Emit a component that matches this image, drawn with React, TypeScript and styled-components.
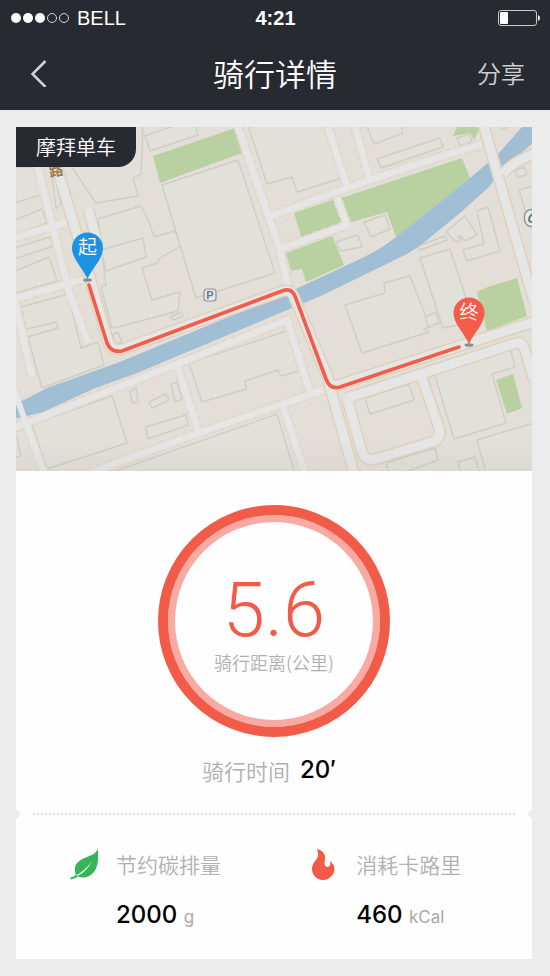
import React from "react";
import styled, { createGlobalStyle } from "styled-components";

const CJK = '"Noto Sans CJK SC", "Liberation Sans", sans-serif';
const INK = "#272a31";
const RED = "#f15b48";
const PAGE = "#ececec";

const GlobalStyle = createGlobalStyle`
  *, *::before, *::after { box-sizing: border-box; }
  body { margin: 0; background: ${PAGE}; font-family: ${CJK}; color: #000; }
  h1, p { margin: 0; font-weight: inherit; }
  svg { display: block; }
`;

const Header = styled.header`
  background: ${INK};
  color: #fff;
`;

const StatusBar = styled.div`
  display: grid;
  grid-template-columns: 1fr auto 1fr;
  align-items: center;
  height: 36px;
  padding: 0 10px 0 11px;
  font: 20px/36px "Liberation Sans", sans-serif;
`;

const Carrier = styled.div`
  display: flex;
  align-items: center;
  gap: 7px;
`;

const Clock = styled.time`
  font-weight: 700;
`;

const BatterySlot = styled.div`
  justify-self: end;
`;

const NavBar = styled.nav`
  display: grid;
  grid-template-columns: 1fr auto 1fr;
  align-items: center;
  height: 74px;
  padding: 0 25px;
`;

const Title = styled.h1`
  font-size: 31px;
  line-height: 44px;
  font-weight: 350;
`;

const NavButton = styled.button<{ $end?: boolean }>`
  justify-self: ${(p) => (p.$end ? "end" : "start")};
  padding: ${(p) => (p.$end ? "0" : "0 5px")};
  border: 0;
  background: none;
  color: #cfcfcf;
  font: 350 24px/36px ${CJK};
  cursor: pointer;
`;

const Main = styled.main`
  padding: 17px 18px 17px 16px;
`;

const Card = styled.article`
  background: #fefefe;
`;

const MapArea = styled.section`
  position: relative;
  overflow: hidden;
`;

const MapSvg = styled.svg`
  width: 100%;
  height: auto;
`;

const Brand = styled.p`
  position: absolute;
  top: 0;
  left: 0;
  padding: 0 20px;
  border-bottom-right-radius: 18px;
  background: ${INK};
  color: #fff;
  font-size: 20px;
  font-weight: 350;
  line-height: 40px;
`;

const Summary = styled.section`
  display: flex;
  flex-direction: column;
  align-items: center;
  padding: 34px 0 23px;
`;

const Ring = styled.div`
  display: flex;
  flex-direction: column;
  align-items: center;
  width: 232px;
  height: 232px;
  padding-top: 55px;
  border: 10px solid ${RED};
  border-radius: 50%;
  box-shadow: inset 0 0 0 7px #f9aaa2;
`;

const Distance = styled.p`
  color: ${RED};
  font: 300 76px/80px Roboto, sans-serif;
`;

const Caption = styled.p<{ $size: number; $line: number }>`
  color: #b0b0b0;
  font-size: ${(p) => p.$size}px;
  line-height: ${(p) => p.$line}px;
  font-weight: 350;
`;

const Duration = styled.div`
  display: flex;
  align-items: center;
  gap: 10px;
  margin-top: 17px;
  padding-right: 10px;
`;

const Value = styled.p`
  font: 500 24px/32px Inter, sans-serif;
`;

const Unit = styled.span`
  color: #a9a9a9;
  font-size: 17px;
  line-height: 17px;
  font-weight: 400;
`;

const Tear = styled.div`
  display: flex;
  align-items: center;
  justify-content: space-between;
  gap: 12px;
  height: 10px;
`;

const Dots = styled.div`
  flex: 1;
  border-top: 2px dotted #dedede;
`;

const Notch = styled.span<{ $right?: boolean }>`
  width: 5px;
  height: 10px;
  background: ${PAGE};
  clip-path: ${(p) =>
    p.$right ? "polygon(100% 0, 0 50%, 100% 100%)" : "polygon(0 0, 100% 50%, 0 100%)"};
`;

const Stats = styled.section`
  display: grid;
  grid-template-columns: 13fr 12fr;
  padding: 29px 0 28px 54px;
`;

const Stat = styled.div`
  display: grid;
  grid-template-columns: 28px 1fr;
  column-gap: 18px;
  row-gap: 19px;
  align-items: center;

  ${Value} {
    grid-column: 2;
  }
`;

const lots = [
  "M8 167 L37 167 L47 193 L8 205Z",
  "M8 223 L42 209 L47 223 L8 237Z",
  "M8 250 L50 237 L53 246 L8 261Z",
  "M8 274 L49 257 L57 281 L8 295Z",
  "M49 150 L54 167 L61 205 L56 208Z",
  "M72 167 L125 119 L137 119 L143 127 L141 174 L133 178 L138 196 L96 203Z",
  "M98 219 L141 206 L149 222 L154 237 L175 231 L181 246 L160 258 L157 263 L142 268 L152 300 L180 292 L178 311 L122 326 L112 328 L101 287 L106 285Z",
  "M101 250 L143 238 L146 257 L106 271Z",
  "M162 185 L238 160 L275 273 L196 298Z",
  "M145 136 L150 151 L198 135 L193 119Z",
  "M246 119 L322 119 L342 178 L297 192 L292 177 L267 184Z",
  "M364 119 L399 119 L403 133 L374 144Z",
  "M377 159 L440 138 L443 147 L381 168Z",
  "M457 138 L469 134 L472 142 L460 146Z",
  "M364 222 L385 215 L390 229 L371 237Z",
  "M336 242 L358 235 L362 247 L340 251Z",
  "M446 232 L465 216 L477 235 L465 241 L463 238 L458 236 L461 240 L459 242 L454 240Z",
  "M477 211 L488 207 L500 251 L467 261 L463 250 L484 244Z",
  "M418 246 L445 236 L447 240 L420 250Z",
  "M420 258 L450 249 L474 322 L443 328Z",
  "M345 305 L385 293 L384 283 L410 276 L430 327 L424 329 L429 332 L362 353Z",
  "M425 317 L436 312 L439 323 L428 327Z",
  "M21 307 L68 294 L81 348 L98 342 L104 365 L42 388 L28 337 L58 328 L57 322 L26 329Z",
  "M112 335 L118 332 L122 343 L116 344Z",
  "M170 317 L181 312 L183 316 L173 320Z",
  "M32 424 L112 396 L127 443 L47 469Z",
  "M130 391 L136 388 L138 402 L132 403Z",
  "M149 402 L166 394 L169 400 L152 408Z",
  "M171 384 L177 382 L182 399 L175 402Z",
  "M146 427 L186 415 L188 425 L148 439Z",
  "M189 363 L287 331 L299 371 L281 376 L278 370 L245 381 L246 389 L202 402Z",
  "M90 480 L277 414 L297 480Z",
  "M365 398 L409 384 L414 400 L370 414Z",
  "M434 372 L510 348 L515 367 L492 374 L506 423 L454 439Z",
  "M477 440 L540 421 L540 480 L488 480Z",
  "M386 463 L435 448 L438 460 L403 473 L389 473Z",
  "M458 462 L475 457 L482 480 L462 480Z",
  "M8 437 L17 437 L21 456 L8 460Z",
  "M519 190 L540 184 L540 222 L526 213Z",
  "M515 171 L524 167 L527 174 L518 178Z",
  "M497 123 L503 130 L511 123Z",
];

const parks = [
  "M153 156 L235 128 L242 153 L160 183Z",
  "M294 213 L335 199 L343 223 L302 239Z",
  "M341 198 L462 158 L470 178 L396 237 L387 212 L348 223Z",
  "M286 253 L332 236 L344 265 L306 282 L302 269 L291 271Z",
  "M457 127 L453 136 L470 133 L474 140 L479 130 L478 127Z",
  "M477 292 Q480 289 517 278 L527 316 L487 331Z",
  "M496 380 L513 374 L522 408 L507 414Z",
];

const footpaths = [
  "M238 127 L280 250 L288 287",
  "M268 217 L347 188 L420 163 L482 144",
  "M328 127 L347 187",
  "M355 127 L370 180",
  "M280 249 L347 225 L337 198",
  "M14 238 L67 222",
  "M37 165 L70 295 L88 342",
  "M14 299 L87 278",
  "M15 300 L32 377",
  "M14 428 L93 397 L190 359 L287 320 L310 392",
  "M177 365 L198 430",
  "M90 473 L190 436 L323 390",
  "M283 407 L305 473",
  "M14 390 L44 473",
];

const streets = [
  "M56 165 L86 264 L108 341 Q113 353 125 348 L283 291 Q291 289 294 297 L332 387 L534 322",
  "M88 208 L98 245",
  "M328 380 L354 473",
  "M347 398 L516 343 Q522 341 525 350 L534 380",
  "M347 398 L362 452 Q366 462 376 459 L432 442 Q442 439 439 428 L421 375",
  "M483 123 L534 302",
  "M503 174 Q512 162 534 154",
];

const route =
  "M89 285 L107 343 Q111 353 122 351 L282 291 Q291 287 295 296 L326 379 Q330 390 340 387 L459 347";

function Lines({ paths, color, width, dash }: { paths: string[]; color: string; width: number; dash?: string }) {
  return (
    <g fill="none" stroke={color} strokeWidth={width} strokeDasharray={dash}>
      {paths.map((d) => (
        <path key={d} d={d} />
      ))}
    </g>
  );
}

function Pin({ x, y, label, fill }: { x: number; y: number; label: string; fill: string }) {
  return (
    <g transform={`translate(${x} ${y})`}>
      <ellipse cx="0" cy="0" rx="4.5" ry="1.8" fill="#8b8d8d" />
      <path d="M0-1 C-4-11-15.5-21-15.5-32 A15.5 15.5 0 1 1 15.5-32 C15.5-21 4-11 0-1Z" fill={fill} />
      <text x="0" y="-26" textAnchor="middle" fontSize="19" fontWeight="350" fill="#fff" fontFamily={CJK}>
        {label}
      </text>
    </g>
  );
}

function RideMap() {
  return (
    <MapSvg viewBox="16 127 516 344" role="img" aria-label="骑行路线">
      <defs>
        <linearGradient id="mapShade" x1="0" y1="0" x2="0" y2="1">
          <stop offset="0" stopColor="#777" stopOpacity="0" />
          <stop offset="1" stopColor="#777" stopOpacity="0.08" />
        </linearGradient>
      </defs>
      <rect x="10" y="120" width="530" height="360" fill="#e3dfd8" />
      <g fill="#e1e1da" stroke="#d0cdc6" strokeWidth="1.4" strokeLinejoin="round">
        {lots.map((d) => (
          <path key={d} d={d} />
        ))}
      </g>
      <g fill="#b9d1a0">
        {parks.map((d) => (
          <path key={d} d={d} />
        ))}
      </g>
      <Lines paths={footpaths} color="#e4d4bd" width={10} dash="6 3" />
      <Lines paths={footpaths} color="#e3dfd8" width={8} />
      <path
        fill="#a0bed4"
        d="M522 127 L497 155 L470 178 L396 237 Q383 248 360 259 L298 288 L190 333 L117 363 L47 388 Q30 397 22 401 L14 403 L14 419 L43 412 L93 389 L137 373 L247 327 L323 295 L360 277 L407 254 Q419 247 427 240 L460 213 L489 187 L502 170 L534 142 L534 125Z"
      />
      <Lines paths={footpaths} color="#e6e6e6" width={6} />
      <Lines paths={streets} color="#decdb3" width={12} />
      <Lines paths={streets} color="#e3dfd8" width={10} />
      <Lines paths={streets} color="#e6e6e6" width={8} />
      <text x="49" y="176" fontSize="14" fontWeight="700" fill="#9b7a4c" fontFamily={CJK} transform="rotate(-12 56 171)">
        路
      </text>
      <rect x="204" y="289" width="12" height="12" rx="3" fill="#e9e9e9" stroke="#8e9499" strokeWidth="1.2" />
      <text x="210" y="299" textAnchor="middle" fontSize="11" fontWeight="700" fill="#66798a" fontFamily="Liberation Sans, sans-serif">
        P
      </text>
      <rect x="524.5" y="209.5" width="18" height="17" rx="7" fill="#ececea" stroke="#92979a" strokeWidth="1.5" />
      <path d="M532 214 Q529 217 529 220 Q529 222 533 222" fill="none" stroke="#66798a" strokeWidth="2" />
      <rect x="10" y="440" width="530" height="40" fill="url(#mapShade)" />
      <path d={route} fill="none" stroke="#f25c49" strokeWidth="3.6" strokeLinecap="round" strokeLinejoin="round" />
      <Pin x={87.5} y={280} label="起" fill="#1b93e2" />
      <Pin x={469} y={345} label="终" fill="#f25c49" />
    </MapSvg>
  );
}

function Signal() {
  return (
    <svg width="59" height="12" viewBox="0 0 59 12" aria-hidden="true">
      {[5, 17, 29].map((x) => (
        <circle key={x} cx={x} cy="6" r="5" fill="#fff" />
      ))}
      {[41, 53].map((x) => (
        <circle key={x} cx={x} cy="6" r="4.5" fill="none" stroke="#d4d5d7" />
      ))}
    </svg>
  );
}

function Battery() {
  return (
    <svg width="43" height="18" viewBox="0 0 43 18" aria-hidden="true">
      <rect x="1.5" y="1.5" width="38" height="15" rx="2.5" fill="none" stroke="#c9cacc" />
      <rect x="3" y="3" width="8" height="12" rx="1" fill="#fff" />
      <path d="M41 6 Q43 7 43 9 Q43 11 41 12Z" fill="#fff" />
    </svg>
  );
}

function Leaf() {
  return (
    <svg width="28" height="32" viewBox="0 0 28 32" aria-hidden="true">
      <path
        fill="#35b558"
        d="M28 1 C25 6 22 7 17 9 C9 12 4 16 5 23 Q5 25 6 27 Q3 29 0 29.5 L1 31.5 Q5 30.5 8 28.5 C14 31 20 29 24 24 C29 17 28 9 28 1Z"
      />
      <path d="M6 27.5 Q16 22 22 13 Q17 23 8 27.7Z" fill="#fff" />
    </svg>
  );
}

function Flame() {
  return (
    <svg width="28" height="32" viewBox="0 0 28 32" aria-hidden="true">
      <path
        fill={RED}
        d="M7 1 C12 2 16 6 15 11 Q14 16 15 17.5 Q17 20 19.5 18 Q21 16 20 13 C23 15 24.5 18 24.5 21 C24.5 27 19 32 13 32 C6 32 2 26 2 21 C2 14 8 12 8 7 Q8 4 7 1Z"
      />
    </svg>
  );
}

export default function App() {
  return (
    <>
      <GlobalStyle />
      <Header>
        <StatusBar>
          <Carrier>
            <Signal />
            <span>BELL</span>
          </Carrier>
          <Clock>4:21</Clock>
          <BatterySlot>
            <Battery />
          </BatterySlot>
        </StatusBar>
        <NavBar>
          <NavButton type="button" aria-label="返回">
            <svg width="17" height="28" viewBox="0 0 17 28" aria-hidden="true">
              <path d="M15.5 2 L2.5 15 L15.5 28" fill="none" stroke="#d2d2d2" strokeWidth="2.5" />
            </svg>
          </NavButton>
          <Title>骑行详情</Title>
          <NavButton type="button" $end>
            分享
          </NavButton>
        </NavBar>
      </Header>
      <Main>
        <Card>
          <MapArea>
            <RideMap />
            <Brand>摩拜单车</Brand>
          </MapArea>
          <Summary>
            <Ring>
              <Distance>5.6</Distance>
              <Caption $size={18} $line={24}>
                骑行距离(公里)
              </Caption>
            </Ring>
            <Duration>
              <Caption $size={22} $line={32}>
                骑行时间
              </Caption>
              <Value>20′</Value>
            </Duration>
          </Summary>
          <Tear>
            <Notch />
            <Dots />
            <Notch $right />
          </Tear>
          <Stats>
            <Stat>
              <Leaf />
              <Caption $size={21} $line={32}>
                节约碳排量
              </Caption>
              <Value>
                2000 <Unit>g</Unit>
              </Value>
            </Stat>
            <Stat>
              <Flame />
              <Caption $size={21} $line={32}>
                消耗卡路里
              </Caption>
              <Value>
                460 <Unit>kCal</Unit>
              </Value>
            </Stat>
          </Stats>
        </Card>
      </Main>
    </>
  );
}
